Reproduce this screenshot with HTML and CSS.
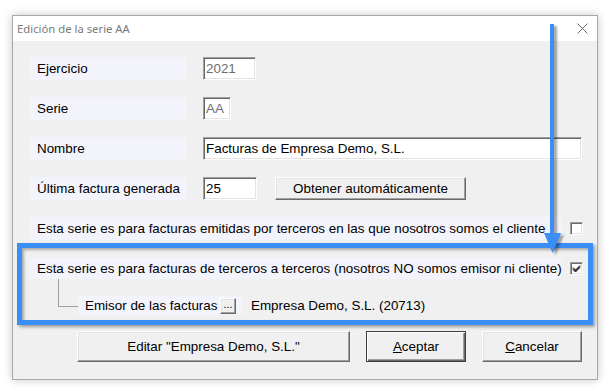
FILE: index.html
```html
<!DOCTYPE html>
<html lang="es">
<head>
<meta charset="utf-8">
<link rel="stylesheet" href="styles.css">
</head>
<body>
<div class="window">
  <div class="titlebar">
    <span class="title">Edición de la serie AA</span>
    <svg class="close" width="11" height="11" viewBox="0 0 11 11"><path d="M0.5 0.5 L10.5 10.5 M10.5 0.5 L0.5 10.5" stroke="#6a6a6a" stroke-width="1" fill="none"/></svg>
  </div>
  <div class="content">
    <div class="row">
      <div class="label">Ejercicio</div>
      <div class="input w53 disabled">2021</div>
    </div>
    <div class="row">
      <div class="label">Serie</div>
      <div class="input w28 disabled">AA</div>
    </div>
    <div class="row">
      <div class="label">Nombre</div>
      <div class="input wname">Facturas de Empresa Demo, S.L.</div>
    </div>
    <div class="row">
      <div class="label">Última factura generada</div>
      <div class="input w54">25</div>
      <div class="btn btn-obtener">Obtener automáticamente</div>
    </div>
    <div class="row">
      <div class="label wide">Esta serie es para facturas emitidas por terceros en las que nosotros somos el cliente</div>
      <div class="check"></div>
    </div>
    <div class="bluebox">
      <div class="row inner">
        <div class="label wide short">Esta serie es para facturas de terceros a terceros (nosotros NO somos emisor ni cliente)</div>
        <div class="check"><svg width="9" height="9" viewBox="0 0 9 9"><path d="M1 3.5 L3.5 6 L8 1.5 M1 4.5 L3.5 7 L8 2.5 M1 5.5 L3.5 8 L8 3.5" stroke="#000" stroke-width="1" fill="none"/></svg></div>
      </div>
      <div class="sub">
        <div class="tree"></div>
        <div class="emisor">
          <span>Emisor de las facturas</span>
          <div class="btn mini">...</div>
        </div>
        <div class="emisor-value">Empresa Demo, S.L. (20713)</div>
      </div>
    </div>
    <div class="buttons">
      <div class="btn big editar">Editar "Empresa Demo, S.L."</div>
      <div class="btn big default"><span><u>A</u>ceptar</span></div>
      <div class="btn big"><span><u>C</u>ancelar</span></div>
    </div>
  </div>
</div>
<svg class="arrow" width="610" height="391" viewBox="0 0 610 391">
  <defs>
    <filter id="blur" x="-50%" y="-50%" width="200%" height="200%"><feGaussianBlur stdDeviation="1.2"/></filter>
  </defs>
  <g fill="#000" opacity="0.35" filter="url(#blur)" transform="translate(3,2)">
    <rect x="550" y="24" width="4" height="212"/>
    <polygon points="544,233 561,233 552.5,253"/>
  </g>
  <g fill="#3a8ef6">
    <rect x="550" y="24" width="4" height="212"/>
    <polygon points="544,233 561,233 552.5,253"/>
  </g>
</svg>
</body>
</html>
```
FILE: styles.css
```css
html, body {
  margin: 0;
  padding: 0;
}
body {
  width: 610px;
  height: 391px;
  background: #ffffff;
  overflow: hidden;
  position: relative;
  font-family: "Liberation Sans", Arial, sans-serif;
  font-size: 13.4px;
  color: #000;
}
.window {
  box-sizing: border-box;
  margin: 15px 0 0 12px;
  width: 586px;
  height: 365px;
  border: 1px solid #a8a8a8;
  box-shadow: 0 0 9px rgba(0, 0, 0, 0.22);
  background: #f0f0f0;
  display: flex;
  flex-direction: column;
}
.titlebar {
  height: 25px;
  background: #ffffff;
  display: flex;
  align-items: center;
  justify-content: space-between;
  padding: 0 9px 0 4px;
  flex: none;
}
.title {
  font-family: "Noto Sans", "Open Sans", sans-serif;
  font-size: 11.3px;
  color: #7b7b7b;
  margin-top: -1px;
}
.content {
  padding-top: 16px;
  flex: 1;
}
.row {
  display: flex;
  align-items: center;
  height: 23px;
  margin: 0 0 17px 16px;
}
.label {
  box-sizing: border-box;
  width: 158px;
  height: 23px;
  padding-left: 8px;
  background: #f3f3fc;
  border-radius: 5px;
  display: flex;
  align-items: center;
  white-space: nowrap;
}
.label.wide {
  width: 533px;
}
.label.short {
  height: 21px;
}
.input {
  box-sizing: border-box;
  height: 23px;
  margin-left: 16px;
  background: #ffffff;
  border: 1px solid;
  border-color: #a0a0a0 #ffffff #ffffff #a0a0a0;
  box-shadow: inset 1px 1px #696969, inset -1px -1px #e3e3e3;
  padding-left: 2px;
  display: flex;
  align-items: center;
  white-space: nowrap;
}
.input.disabled {
  color: #6d6d6d;
}
.w53 { width: 53px; }
.w28 { width: 28px; }
.w54 { width: 54px; }
.wname { width: 379px; }
.btn {
  box-sizing: border-box;
  background: #f0f0f0;
  border: 1px solid;
  border-color: #ffffff #696969 #696969 #ffffff;
  box-shadow: inset -1px -1px #a0a0a0, inset 1px 1px #e3e3e3;
  display: flex;
  align-items: center;
  justify-content: center;
  white-space: nowrap;
}
.btn-obtener {
  width: 191px;
  height: 23px;
  margin-left: 18px;
}
.check {
  box-sizing: border-box;
  width: 13px;
  height: 13px;
  margin-left: 8px;
  background: #ffffff;
  border: 1px solid;
  border-color: #a0a0a0 #ffffff #ffffff #a0a0a0;
  box-shadow: inset 1px 1px #696969, inset -1px -1px #e3e3e3;
  display: flex;
  align-items: center;
  justify-content: center;
}
.check svg {
  display: block;
}
.bluebox {
  box-sizing: border-box;
  margin: -14px 0 0 4px;
  width: 576px;
  height: 82px;
  border: 5px solid #3a8ef6;
  padding: 10px 0 0 0;
  box-shadow: 2px 2px 3px rgba(0, 0, 0, 0.35), inset 2px 2px 3px rgba(0, 0, 0, 0.3);
}
.row.inner {
  height: 21px;
  margin: 0 0 0 7px;
}
.sub {
  display: flex;
  align-items: flex-start;
  margin-left: 36px;
}
.tree {
  box-sizing: border-box;
  width: 20px;
  height: 28px;
  border-left: 1px solid #a0a0a0;
  border-bottom: 1px solid #a0a0a0;
}
.emisor {
  box-sizing: border-box;
  margin-top: 17px;
  width: 164px;
  height: 19px;
  padding: 0 6px 0 7px;
  background: #f3f3fc;
  border-radius: 4px;
  display: flex;
  align-items: center;
  justify-content: space-between;
}
.btn.mini {
  width: 16px;
  height: 16px;
  font-size: 11px;
  line-height: 1;
  padding-bottom: 3px;
}
.emisor-value {
  margin: 17px 0 0 9px;
  height: 19px;
  display: flex;
  align-items: center;
}
.buttons {
  display: flex;
  margin: 6px 0 0 64px;
  gap: 17px;
}
.btn.big {
  width: 100px;
  height: 31px;
}
.btn.big.editar {
  width: 273px;
}
.btn.default {
  border: 1px solid #3c3c3c;
  box-shadow: inset 1px 1px #ffffff, inset -1px -1px #696969, inset -2px -2px #a0a0a0;
  margin-left: -1px;
}
.buttons .btn:last-child {
  margin-left: -1px;
}
.arrow {
  position: absolute;
  left: 0;
  top: 0;
  pointer-events: none;
}
```
